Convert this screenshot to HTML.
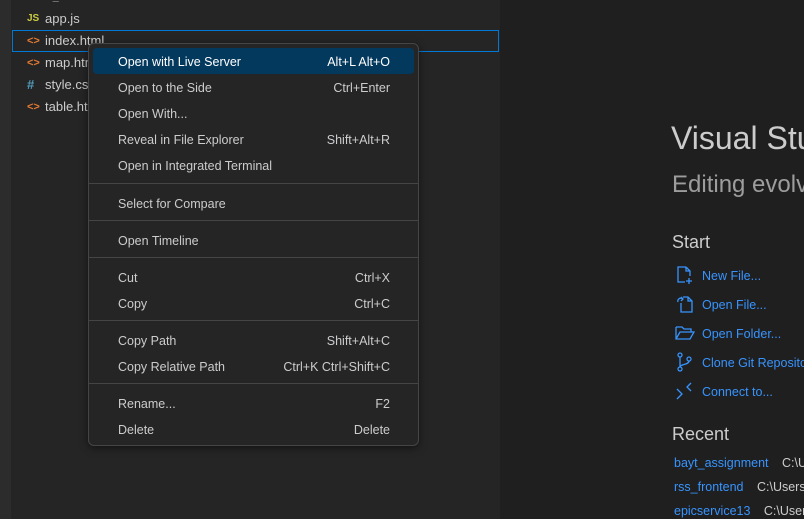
<!DOCTYPE html>
<html style="overflow:hidden;width:804px;height:519px"><head><style>
*{margin:0;padding:0;box-sizing:border-box}
body{width:804px;height:519px;overflow:hidden;background:#1f1f1f;font-family:"Liberation Sans",sans-serif;position:relative;white-space:nowrap}
.act{position:absolute;left:0;top:0;width:11px;height:519px;background:#2c2c2c}
.side{position:absolute;left:11px;top:0;width:489px;height:519px;background:#252525}
.row{position:absolute;left:12px;height:22px;width:487px;font-size:13px;color:#cccccc;line-height:22px}
.row .ic{position:absolute;left:15px;font-size:11px;font-weight:bold}
.row .t{position:absolute;left:33px}
.sel{border:1px solid #0078d4;line-height:20px}
.menu{position:absolute;left:88px;top:43px;width:331px;height:403px;background:#252526;border:1px solid #454545;border-radius:6px;box-shadow:0 2px 8px rgba(0,0,0,.5)}
.mi{position:absolute;left:4px;width:321px;height:26px;font-size:12.5px;color:#cccccc;line-height:28px;border-radius:4px}
.mi .l{position:absolute;left:25px}
.mi .r{position:absolute;right:24px}
.hl{background:#04395e;color:#fff}
.sep{position:absolute;left:0;width:329px;height:1px;background:#454545}
.a{position:absolute;font-size:12.5px;color:#3794ff}
.ico{position:absolute;left:675px}
</style></head><body>
<div class="act"></div>
<div class="side"></div>
<div class="row" style="top:-14px;font-weight:bold;font-size:11px"><span class="t" style="left:18px">RSS_FRONTEND</span></div>
<div class="row" style="top:8px"><span class="ic" style="color:#cbcb41;font-size:10px">JS</span><span class="t">app.js</span></div>
<div class="row sel" style="top:30px"><span class="ic" style="color:#e37933;left:14px">&lt;&gt;</span><span class="t" style="left:32px">index.html</span></div>
<div class="row" style="top:52px"><span class="ic" style="color:#e37933">&lt;&gt;</span><span class="t">map.html</span></div>
<div class="row" style="top:74px"><span class="ic" style="color:#519aba;font-size:13px">#</span><span class="t">style.css</span></div>
<div class="row" style="top:96px"><span class="ic" style="color:#e37933">&lt;&gt;</span><span class="t">table.html</span></div>

<div class="menu">
<div class="mi hl" style="top:4px"><span class="l">Open with Live Server</span><span class="r">Alt+L Alt+O</span></div>
<div class="mi" style="top:30px"><span class="l">Open to the Side</span><span class="r">Ctrl+Enter</span></div>
<div class="mi" style="top:56px"><span class="l">Open With...</span></div>
<div class="mi" style="top:82px"><span class="l">Reveal in File Explorer</span><span class="r">Shift+Alt+R</span></div>
<div class="mi" style="top:108px"><span class="l">Open in Integrated Terminal</span></div>
<div class="sep" style="top:139px"></div>
<div class="mi" style="top:146px"><span class="l">Select for Compare</span></div>
<div class="sep" style="top:176px"></div>
<div class="mi" style="top:183px"><span class="l">Open Timeline</span></div>
<div class="sep" style="top:213px"></div>
<div class="mi" style="top:220px"><span class="l">Cut</span><span class="r">Ctrl+X</span></div>
<div class="mi" style="top:246px"><span class="l">Copy</span><span class="r">Ctrl+C</span></div>
<div class="sep" style="top:276px"></div>
<div class="mi" style="top:283px"><span class="l">Copy Path</span><span class="r">Shift+Alt+C</span></div>
<div class="mi" style="top:309px"><span class="l">Copy Relative Path</span><span class="r">Ctrl+K Ctrl+Shift+C</span></div>
<div class="sep" style="top:339px"></div>
<div class="mi" style="top:346px"><span class="l">Rename...</span><span class="r">F2</span></div>
<div class="mi" style="top:372px"><span class="l">Delete</span><span class="r">Delete</span></div>
</div>

<div style="position:absolute;left:671px;top:120px;font-size:32px;color:#cccccc">Visual Studio Code</div>
<div style="position:absolute;left:672px;top:171px;font-size:24px;color:#9d9d9d">Editing evolved</div>
<div style="position:absolute;left:672px;top:232px;font-size:18px;color:#cccccc">Start</div>
<svg class="ico" style="top:265px" width="20" height="20" viewBox="0 0 20 20" fill="none" stroke="#3794ff" stroke-width="1.3"><path d="M11 2H3v15h7M11 2l4 4v5M11 2v4h4M14 13v6M11 16h6"/></svg>
<div class="a" style="left:702px;top:269px">New File...</div>
<svg class="ico" style="top:294px" width="20" height="20" viewBox="0 0 20 20" fill="none" stroke="#3794ff" stroke-width="1.3"><path d="M8 3h5l4 4v11H6V9M13 3v4h4M3 8a3 3 0 0 1 5-3M6 3l2 2-2 2"/></svg>
<div class="a" style="left:702px;top:298px">Open File...</div>
<svg class="ico" style="top:323px" width="20" height="20" viewBox="0 0 20 20" fill="none" stroke="#3794ff" stroke-width="1.3"><path d="M1 4h6l2 2h7v3M1 4v12h14l4-7H5l-4 7"/></svg>
<div class="a" style="left:702px;top:327px">Open Folder...</div>
<svg class="ico" style="top:352px" width="20" height="20" viewBox="0 0 20 20" fill="none" stroke="#3794ff" stroke-width="1.3"><circle cx="5" cy="3" r="2"/><circle cx="5" cy="17" r="2"/><circle cx="14" cy="7" r="2"/><path d="M5 5v10M14 9c0 4-9 3-9 6"/></svg>
<div class="a" style="left:702px;top:356px">Clone Git Repository...</div>
<svg class="ico" style="top:381px" width="20" height="20" viewBox="0 0 20 20" fill="none" stroke="#3794ff" stroke-width="1.3"><path d="M2 8l5 5-5 5M16 2l-4 4 4 4"/></svg>
<div class="a" style="left:702px;top:385px">Connect to...</div>
<div style="position:absolute;left:672px;top:424px;font-size:18px;color:#cccccc">Recent</div>
<div class="a" style="left:674px;top:456px">bayt_assignment <span style="color:#cccccc;margin-left:10px">C:\Users</span></div>
<div class="a" style="left:674px;top:480px">rss_frontend <span style="color:#cccccc;margin-left:10px">C:\Users\</span></div>
<div class="a" style="left:674px;top:504px">epicservice13 <span style="color:#cccccc;margin-left:10px">C:\Users</span></div>
</body></html>
